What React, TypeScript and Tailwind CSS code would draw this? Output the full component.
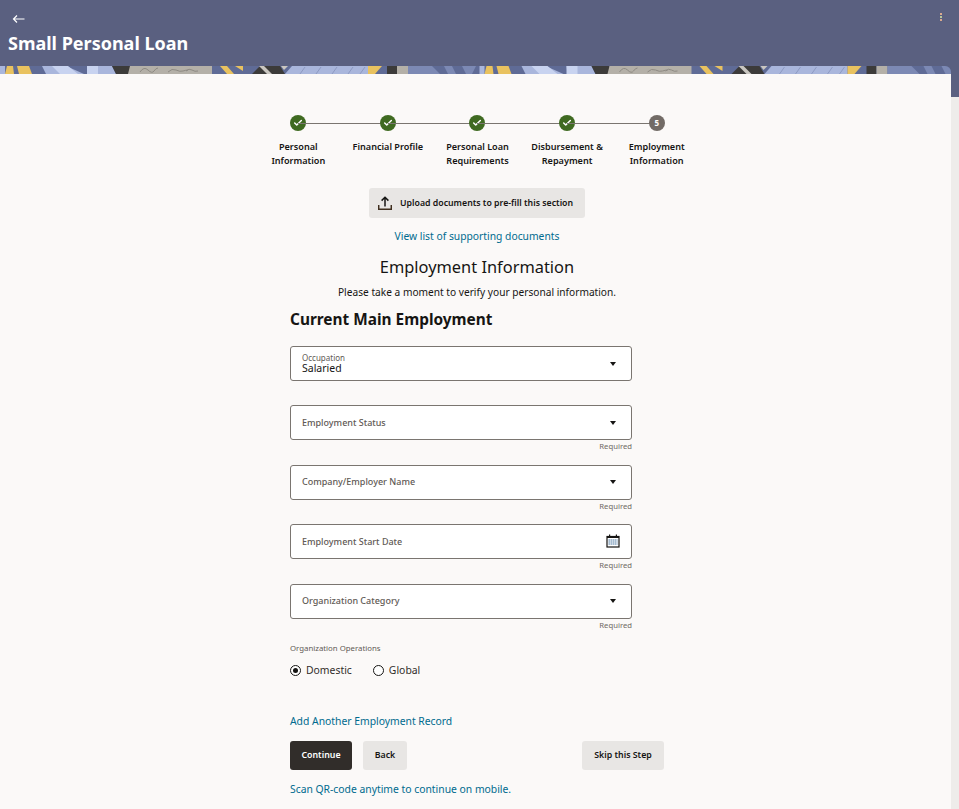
import { Check } from 'lucide-react';

const steps = [
    { label: ['Personal', 'Information'], done: true },
    { label: ['Financial Profile'], done: true },
    { label: ['Personal Loan', 'Requirements'], done: true },
    { label: ['Disbursement &', 'Repayment'], done: true },
    { label: ['Employment', 'Information'], done: false },
];

// one period of the decorative strip, repeated twice
function BannerTile({ x }: { x: number }) {
    return (
        <g transform={`translate(${x} 0)`}>
            <rect width="480" height="8" fill="#5f6b96" />
            <polygon points="0,0 5,0 5,8 0,8" fill="#a9b6dc" />
            <polygon points="7,0 13,0 14,8 5,8" fill="#e9c25f" />
            <polygon points="17,0 29,0 32,8 19,8" fill="#e9c25f" />
            <polygon points="42,0 66,0 84,8 46,8" fill="#a9b6dc" />
            <polygon points="52,0 68,0 78,8 60,8" fill="#c8d3f0" />
            <polygon points="87,0 112,0 116,8 88,8" fill="#a9b6dc" />
            <polygon points="87,0 98,0 98,8 87,8" fill="#c8d3f0" />
            <polygon points="112,0 130,0 132,8 116,8" fill="#3c3b3a" />
            <polygon points="130,0 212,0 212,8 128,8" fill="#b4b0a8" />
            <path d="M140 6q4-6 8-2t6 1 4-3M168 6q4-4 8-2t7 1 5-1M186 5q3-3 6-1t6 1" stroke="#8e8a83" strokeWidth="1" fill="none" />
            <polygon points="220,0 227,0 234,8 227,8" fill="#e9c25f" />
            <polygon points="235,0 243,0 243,5" fill="#e9c25f" />
            <polygon points="252,8 260,0 280,0 285,8" fill="#3c3b3a" />
            <polygon points="259,0 264,0 272,8 267,8" fill="#c9c6c0" />
            <polygon points="281,0 288,0 284,4" fill="#c9c6c0" />
            <polygon points="292,0 368,0 368,8 285,8" fill="#a9b6dc" />
            <path d="M300 8l5-7M316 8l5-7M332 8l5-7M348 8l5-7M360 8l5-7" stroke="#8793bb" strokeWidth="0.8" fill="none" />
            <polygon points="368,0 382,0 375,8 368,8" fill="#e9c25f" />
            <rect x="387" width="10" height="8" fill="#3c3b3a" />
            <rect x="397" width="11" height="8" fill="#b4b0a8" />
            <polygon points="408,0 432,0 440,8 408,8" fill="#7c89b4" />
            <polygon points="444,0 452,0 456,8 448,8" fill="#7c89b4" />
            <polygon points="462,0 476,0 472,8 466,8" fill="#7c89b4" />
        </g>
    );
}

function BannerStrip() {
    return (
        <div className="h-[8px] w-[951px] rounded-tr-[6px] overflow-hidden">
            <svg width="951" height="8" viewBox="0 0 951 8" className="block">
                <BannerTile x={0} />
                <BannerTile x={479.5} />
            </svg>
        </div>
    );
}

function StepDot({ done, index }: { done: boolean; index: number }) {
    return done ? (
        <div className="w-4 h-4 rounded-full bg-[#3f6a21] flex items-center justify-center shrink-0">
            <Check className="w-2.5 h-2.5 text-white" strokeWidth={3.5} />
        </div>
    ) : (
        <div className="w-4 h-4 rounded-full bg-[#726b66] flex items-center justify-center shrink-0 text-[8px] font-bold text-white">
            {index + 1}
        </div>
    );
}

function Stepper() {
    return (
        <div className="relative flex justify-center h-[60px] pt-[41px]">
            <div className="w-[448px] ml-[4px] flex">
                {steps.map((step, i) => (
                    <div key={i} className="relative flex-1 flex flex-col items-center">
                        {i > 0 && <div className="absolute h-px bg-[#7a7570] top-[7.5px] right-1/2 w-full" />}
                        <div className="relative">
                            <StepDot done={step.done} index={i} />
                        </div>
                        <div className="mt-[9px] text-[9.1px] leading-[14px] font-semibold text-[#161513] text-center whitespace-nowrap">
                            {step.label.map((line) => (
                                <div key={line}>{line}</div>
                            ))}
                        </div>
                    </div>
                ))}
            </div>
        </div>
    );
}

function Caret() {
    return <div className="w-0 h-0 border-x-[3.5px] border-x-transparent border-t-[4px] border-t-[#161513]" />;
}

function CalendarIcon() {
    return (
        <svg width="14" height="14" viewBox="0 0 14 14" fill="none">
            <rect x="1" y="2.5" width="12" height="10.5" fill="none" stroke="#161513" strokeWidth="1.2" />
            <rect x="1" y="2.5" width="12" height="1.5" fill="#161513" />
            <rect x="3" y="0.5" width="1.2" height="3" fill="#161513" />
            <rect x="9.8" y="0.5" width="1.2" height="3" fill="#161513" />
            <path d="M2.5 6h9M2.5 8h9M2.5 10h9" stroke="#3c6e9a" strokeWidth="1.1" strokeDasharray="1.4 0.6" />
        </svg>
    );
}

function Field({ label, value, required, calendar }: { label: string; value?: string; required?: boolean; calendar?: boolean }) {
    return (
        <div className="w-[342px]">
            <div className="h-[35px] bg-white border border-[#7a7570] rounded-[3px] pl-[11px] pr-[14px] flex items-center justify-between">
                {value ? (
                    <div className="-mt-[1px]">
                        <div className="text-[8px] leading-[9px] text-[#5f5a55]">{label}</div>
                        <div className="text-[10.5px] leading-[12px] text-[#161513]">{value}</div>
                    </div>
                ) : (
                    <div className="text-[9px] leading-[12px] font-medium text-[#5f5a55]">{label}</div>
                )}
                {calendar ? <div className="-mr-[3px] mt-[-1px]"><CalendarIcon /></div> : <div className="mr-[1px]"><Caret /></div>}
            </div>
            <div className="h-[13px] mt-[1px] text-[7.7px] leading-[10px] text-[#6f6a65] text-right">{required ? 'Required' : ''}</div>
        </div>
    );
}

function Radio({ label, checked }: { label: string; checked?: boolean }) {
    return (
        <div className="flex items-center gap-[5px]">
            <div className="w-[11px] h-[11px] rounded-full border border-[#161513] bg-white flex items-center justify-center">
                {checked && <div className="w-[5px] h-[5px] rounded-full bg-[#161513]" />}
            </div>
            <span className="text-[10.4px] text-[#312d2a]">{label}</span>
        </div>
    );
}

export default function App() {
    return (
        <div className="h-[809px] overflow-hidden bg-[#eeecea] font-['Noto_Sans',sans-serif]">
            <header className="h-[66px] bg-[#5a6080] relative px-2 pt-[12px]">
                <svg width="14" height="14" viewBox="0 0 14 14" fill="none" stroke="white" strokeWidth="1.2" className="ml-[4px]">
                    <path d="M1.5 7h11M5 3.5 1.5 7 5 10.5" />
                </svg>
                <h1 className="mt-[4px] text-[18px] leading-[26px] font-bold text-white">Small Personal Loan</h1>
                <div className="absolute right-[17px] top-[13px] flex flex-col gap-px">
                    <div className="w-[2px] h-[2px] bg-[#d9a98f]" />
                    <div className="w-[2px] h-[2px] bg-[#b9c79a]" />
                    <div className="w-[2px] h-[2px] bg-[#d9a98f]" />
                </div>
            </header>
            <div className="bg-[#5a6080] h-[31px] -mb-[23px]">
                <BannerStrip />
            </div>
            <main className="relative w-[951px] h-[735px] bg-[#fbf9f8] overflow-hidden">
                <Stepper />
                <div className="flex flex-col items-center pt-[54px]">
                    <div className="h-[30px] w-[216px] ml-[3px] bg-[#e8e6e4] rounded-[3px] flex items-center gap-[8px] pl-[9px]">
                        <svg width="14" height="14" viewBox="0 0 14 14" fill="none" stroke="#161513" strokeWidth="1.5" className="shrink-0">
                            <path d="M7 10.5V1.5M3.6 4.6 7 1.2l3.4 3.4" />
                            <path d="M.7 9v4.2h12.6V9" stroke="#3f2f1f" />
                        </svg>
                        <span className="pt-[1px] text-[8.75px] font-semibold text-[#161513] whitespace-nowrap">Upload documents to pre-fill this section</span>
                    </div>
                    <a className="mt-[11px] ml-[3px] text-[10.3px] leading-[14px] text-[#006b8f]">View list of supporting documents</a>
                    <h2 className="mt-[13px] ml-[3px] text-[16.4px] leading-[22px] text-[#161513]">Employment Information</h2>
                    <p className="mt-[7px] ml-[3px] text-[10.17px] leading-[14px] text-[#161513]">Please take a moment to verify your personal information.</p>
                </div>
                <div className="ml-[290px] w-[374px]">
                    <h3 className="mt-[10px] text-[15.4px] leading-[22px] font-bold text-[#161513]">Current Main Employment</h3>
                    <div className="mt-[15px] flex flex-col">
                        <div className="mb-[10px]"><Field label="Occupation" value="Salaried" /></div>
                        <Field label="Employment Status" required />
                        <div className="mt-[10.5px]"><Field label="Company/Employer Name" required /></div>
                        <div className="mt-[10.5px]"><Field label="Employment Start Date" required calendar /></div>
                        <div className="mt-[10.5px]"><Field label="Organization Category" required /></div>
                    </div>
                    <div className="mt-[9px] text-[7.8px] leading-[12px] text-[#5f5a55]">Organization Operations</div>
                    <div className="mt-[9px] flex gap-[21px]">
                        <Radio label="Domestic" checked />
                        <Radio label="Global" />
                    </div>
                    <a className="block mt-[36px] text-[10.35px] leading-[14px] text-[#006b8f]">Add Another Employment Record</a>
                    <div className="mt-[13px] flex">
                        <button className="h-[29px] w-[62px] bg-[#312d2a] text-white rounded-[3px] text-[8.8px] font-semibold">Continue</button>
                        <button className="ml-[11px] h-[29px] w-[44px] bg-[#e8e6e4] text-[#161513] rounded-[3px] text-[8.8px] font-semibold">Back</button>
                        <button className="ml-auto h-[29px] w-[82px] bg-[#e8e6e4] text-[#161513] rounded-[3px] text-[8.8px] font-semibold">Skip this Step</button>
                    </div>
                    <a className="block mt-[12px] text-[10.35px] leading-[14px] text-[#006b8f]">Scan QR-code anytime to continue on mobile.</a>
                </div>
            </main>
        </div>
    );
}
